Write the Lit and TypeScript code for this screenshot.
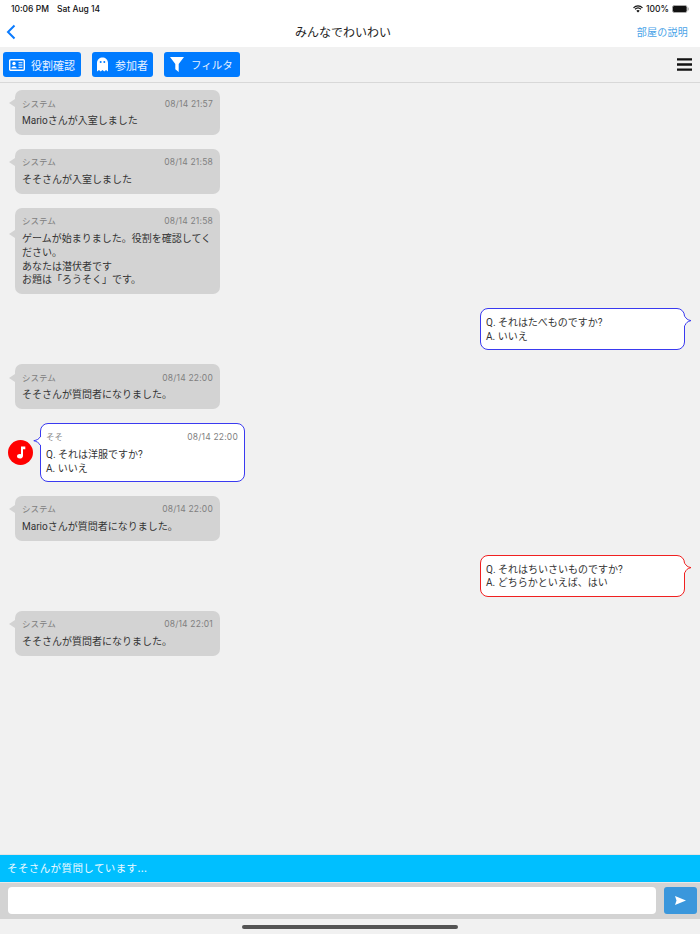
import { LitElement, html, css, svg } from "lit";
import { customElement } from "lit/decorators.js";

const sysTail = svg`<svg class="tail" width="6" height="8" viewBox="0 0 6 8"><path d="M6 0 L0 4 L6 8Z" fill="#d3d3d3"/></svg>`;
const tailL = (c: string) => svg`<svg class="tail" width="8" height="9" viewBox="0 0 8 9"><path d="M7 0.5 C6 2.6 4 3.6 0.8 4.2 C3.5 5 6 6 7 8.5 L8 8.5 V0.5Z" fill="#fff"/><path d="M7 0.5 C6 2.6 4 3.6 0.8 4.2 C3.5 5 6 6 7 8.5" fill="none" stroke="${c}" stroke-width="1"/></svg>`;
const tailR = (c: string) => svg`<svg class="tail r" width="8" height="10" viewBox="0 0 8 10"><path d="M1 0.5 C2 2.6 3.5 4 7 4.6 C3.5 5.4 2 6.8 1 9.5 L0 9.5 V0.5Z" fill="#fff"/><path d="M1 0.5 C2 2.6 3.5 4 7 4.6 C3.5 5.4 2 6.8 1 9.5" fill="none" stroke="${c}" stroke-width="1"/></svg>`;

const sys = (time: string, lines: string[]) => html`
  <div class="row"><div class="bubble sys">${sysTail}
    <div class="meta"><span>システム</span><span class="time">${time}</span></div>
    ${lines.map((l) => html`<div class="line">${l}</div>`)}
  </div></div>`;

const mine = (color: string, lines: string[]) => html`
  <div class="row end"><div class="bubble own" style="border-color:${color}">${tailR(color)}
    ${lines.map((l) => html`<div class="line">${l}</div>`)}
  </div></div>`;

@customElement("app-root")
export class AppRoot extends LitElement {
  static styles = css`
    :host { display: flex; flex-direction: column; width: 700px; height: 934px; background: #f1f1f1; overflow: hidden;
      font-family: "Inter", "Noto Sans CJK JP", sans-serif; color: #333; }
    .top { background: #fff; height: 47px; display: flex; flex-direction: column; flex: none; }
    .status { height: 17px; display: flex; align-items: center; justify-content: space-between; padding: 0 11px; font-size: 8.5px; color: #111; font-family: "Inter", sans-serif; font-weight: 500; }
    .status .l { display: flex; gap: 8px; }
    .status .r { display: flex; align-items: center; gap: 3px; }
    .nav { flex: 1; display: grid; grid-template-columns: 1fr auto 1fr; align-items: center; padding: 0 12px 0 6px; }
    .title { font-size: 12px; font-family: "Noto Sans CJK JP", sans-serif; color: #222; margin: 0 8px 2px 0; }
    .desc { font-size: 10px; color: #4aa3e8; letter-spacing: 0.25px; font-family: "Noto Sans CJK JP", sans-serif; justify-self: end; margin-bottom: 2px; }
    .tools { height: 36px; flex: none; box-sizing: border-box; border-bottom: 1px solid #d8d8d8; display: flex; align-items: center; padding: 0 8px 0 3px; gap: 11px; }
    .btn { height: 25px; background: #007bff; border-radius: 3px; color: #e8f2ff; font-size: 11px; display: flex; align-items: center; box-sizing: border-box; font-family: "Noto Sans CJK JP", sans-serif; }
    .b1 { width: 78px; padding-left: 6px; gap: 6px; }
    .b2 { width: 61px; padding-left: 5px; gap: 7px; }
    .b3 { width: 76px; padding-left: 6px; gap: 7px; font-size: 10.5px; }
    .menu { margin-left: auto; display: flex; }
    .chat { flex: 1; display: flex; flex-direction: column; gap: 14px; padding-top: 7px; }
    .row { display: flex; padding-left: 15px; align-items: center; }
    .row.end { justify-content: flex-end; padding: 0 15px 0 0; }
    .row.other { padding-left: 8px; gap: 7px; }
    .avatar { width: 25px; height: 25px; border-radius: 50%; background: #f00; display: flex; align-items: center; justify-content: center; }
    .bubble { position: relative; width: 205px; box-sizing: border-box; border-radius: 7px; padding: 6.5px 7px 7.2px; font-size: 10px; color: #333; }
    .sys { background: #d3d3d3; }
    .other .bubble { background: #fff; border: 1px solid; border-radius: 8px; padding: 6px 6px 5.5px 5px; }
    .own { background: #fff; border: 1px solid; border-radius: 8px; padding: 6.7px 6px 5.7px 5px; }
    .meta { display: flex; justify-content: space-between; font-size: 8.5px; color: #808080; line-height: 15px; margin-bottom: 2.5px; }
    .meta .time, .other .meta span:last-child { letter-spacing: 0.2px; }
    .line { line-height: 13.8px; font-family: "Roboto", "Noto Sans CJK JP", sans-serif; }
    .tail { position: absolute; left: -6px; top: 30%; transform: translateY(-50%); display: block; }
    .other .tail { left: -8px; }
    .tail.r { left: auto; right: -8px; }
    .bar { height: 27px; flex: none; box-sizing: content-box; background: #00bfff; border-top: 1px solid #e4e4e4; color: #eefaff; font-size: 10.5px; display: flex; align-items: center; padding-left: 7px; letter-spacing: 0.4px; font-family: "Noto Sans CJK JP", sans-serif; }
    .bar span { margin-bottom: 2px; }
    .input { height: 37px; flex: none; background: #d3d3d3; display: flex; align-items: center; padding: 0 3px 1px 8px; gap: 8px; border-top: 1px solid #e8e8e8; box-sizing: border-box; }
    .field { flex: 1; height: 27px; background: #fff; border-radius: 4px; }
    .send { width: 33px; height: 27px; background: #3a97dc; border-radius: 3px; display: flex; align-items: center; justify-content: center; }
    .home { height: 15px; flex: none; display: flex; justify-content: center; align-items: center; }
    .home div { width: 216px; height: 4px; border-radius: 2px; background: #555; }
  `;

  render() {
    const blue = "#3a3af0";
    const red = "#f02020";
    return html`
      <div class="top">
        <div class="status">
          <div class="l"><span>10:06 PM</span><span>Sat Aug 14</span></div>
          <div class="r">
            <svg width="10" height="8" viewBox="0 0 10 8"><path d="M0.5 2.8 C3 0.3 7 0.3 9.5 2.8 M2 4.3 C3.8 2.7 6.2 2.7 8 4.3" fill="none" stroke="#111" stroke-width="1.2"/><path d="M5 7.6 L3.3 5.7 C4.3 4.9 5.7 4.9 6.7 5.7Z" fill="#111"/></svg>
            <span>100%</span>
            <svg width="17" height="8" viewBox="0 0 17 8"><rect x="0.5" y="0.5" width="14.5" height="7" rx="1.8" fill="#111" stroke="#aaa"/><rect x="15.6" y="2.6" width="1.2" height="2.8" fill="#aaa"/></svg>
          </div>
        </div>
        <div class="nav">
          <svg width="10" height="16" viewBox="0 0 10 16"><path d="M8.5 1.5 L2 8 L8.5 14.5" fill="none" stroke="#0a7bff" stroke-width="2"/></svg>
          <div class="title">みんなでわいわい</div>
          <div class="desc">部屋の説明</div>
        </div>
      </div>
      <div class="tools">
        <div class="btn b1">
          <svg width="16" height="12" viewBox="0 0 16 12"><rect x="0.7" y="0.7" width="14.6" height="10.6" rx="1" fill="none" stroke="#fff" stroke-width="1.4"/><circle cx="5" cy="4.5" r="1.7" fill="#fff"/><path d="M2.3 9.3 C2.5 6.6 7.5 6.6 7.7 9.3Z" fill="#fff"/><path d="M9.5 3.7h4M9.5 6h4M9.5 8.3h4" stroke="#fff" stroke-width="1"/></svg>
          <span>役割確認</span>
        </div>
        <div class="btn b2">
          <svg width="11" height="15" viewBox="0 0 11 15"><path d="M0 6 C0 -1.5 11 -1.5 11 6 V14.5 L9 13 L7.3 14.5 L5.5 13 L3.7 14.5 L2 13 L0 14.5Z" fill="#fff"/><circle cx="3.7" cy="5" r="1" fill="#007bff"/><circle cx="7.3" cy="5" r="1" fill="#007bff"/></svg>
          <span>参加者</span>
        </div>
        <div class="btn b3">
          <svg width="14" height="15" viewBox="0 0 14 15"><path d="M0 0 H14 L8.7 7 V15 L5.3 12.3 V7Z" fill="#fff"/></svg>
          <span>フィルタ</span>
        </div>
        <svg class="menu" width="15" height="13" viewBox="0 0 15 13"><path d="M0 1.3h15M0 6.5h15M0 11.7h15" stroke="#111" stroke-width="2.3"/></svg>
      </div>
      <div class="chat">
        ${sys("08/14 21:57", ["Marioさんが入室しました"])}
        ${sys("08/14 21:58", ["そそさんが入室しました"])}
        ${sys("08/14 21:58", ["ゲームが始まりました。役割を確認してく", "ださい。", "あなたは潜伏者です", "お題は「ろうそく」です。"])}
        ${mine(blue, ["Q. それはたべものですか?", "A. いいえ"])}
        ${sys("08/14 22:00", ["そそさんが質問者になりました。"])}
        <div class="row other">
          <div class="avatar"><svg width="10" height="13" viewBox="0 0 10 13"><path d="M5 0.5 H9.3 V3.2 H7 V10 C7 13.2 1 13.5 1 10.3 C1 8.3 3.3 7.5 5 8.2Z" fill="#fff"/></svg></div>
          <div class="bubble" style="border-color:${blue}">${tailL(blue)}
            <div class="meta"><span>そそ</span><span>08/14 22:00</span></div>
            <div class="line">Q. それは洋服ですか?</div>
            <div class="line">A. いいえ</div>
          </div>
        </div>
        ${sys("08/14 22:00", ["Marioさんが質問者になりました。"])}
        ${mine(red, ["Q. それはちいさいものですか?", "A. どちらかといえば、はい"])}
        ${sys("08/14 22:01", ["そそさんが質問者になりました。"])}
      </div>
      <div class="bar"><span>そそさんが質問しています...</span></div>
      <div class="input">
        <div class="field"></div>
        <div class="send"><svg width="11" height="9" viewBox="0 0 11 9"><path d="M0 0 L11 4.5 L0 9 L1.5 4.5Z" fill="#fff"/></svg></div>
      </div>
      <div class="home"><div></div></div>
    `;
  }
}
